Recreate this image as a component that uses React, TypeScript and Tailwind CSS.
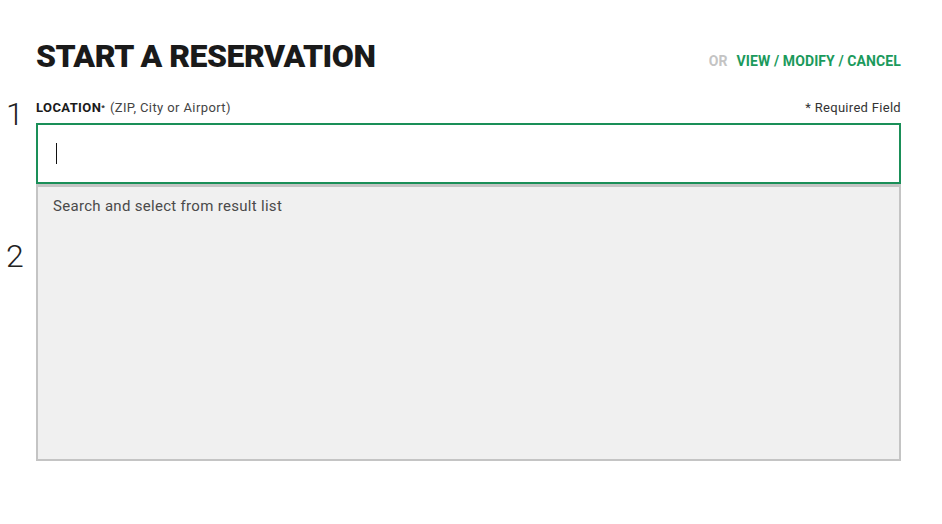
import React from "react";

export default function App() {
  return (
    <div className="w-[942px] h-[524px] bg-white relative" style={{ fontFamily: "Roboto, 'Liberation Sans', sans-serif" }}>
      <div className="pl-[36px] pr-[41px] pt-[38px]">
        <div className="flex items-end justify-between">
          <h1 className="text-[32px] leading-[36px] font-black text-[#1a1a1a] tracking-[-0.5px]">
            START A RESERVATION
          </h1>
          <div className="text-[14px] font-bold mb-[2px] tracking-[0.1px]">
            <span className="text-[#c4c4c4] mr-[9px]">OR</span>
            <span className="text-[#1b9a5c]">VIEW / MODIFY / CANCEL</span>
          </div>
        </div>
        <div className="relative mt-[26px] flex items-end justify-between text-[13px] leading-[16px]">
          <span className="absolute left-[-30px] top-[-3px] text-[32px] leading-[34px] font-light text-[#222]">1</span>
          <div>
            <span className="font-bold text-[#1a1a1a] tracking-[0.4px]">LOCATION</span>
            <span className="font-bold text-[#1a1a1a] text-[8px] align-top">*</span>
            <span className="text-[#444] ml-[5px] tracking-[0.4px]">(ZIP, City or Airport)</span>
          </div>
          <div className="text-[#333] tracking-[0.3px]">* Required Field</div>
        </div>
        <div className="mt-[7px] h-[61px] border-2 border-[#1a8f58] bg-white flex items-center pl-[18px]">
          <div className="w-[1px] h-[21px] bg-[#111]" />
        </div>
        <div className="relative h-[277px] border-2 border-t-[3px] border-[#c4c4c4] bg-[#f0f0f0] px-[15px] pt-[8px]">
          <span className="absolute left-[-32px] top-[52px] text-[32px] leading-[34px] font-light text-[#222]">2</span>
          <div className="text-[15px] text-[#4a4a4a] tracking-[0.3px]">Search and select from result list</div>
        </div>
      </div>
    </div>
  );
}
